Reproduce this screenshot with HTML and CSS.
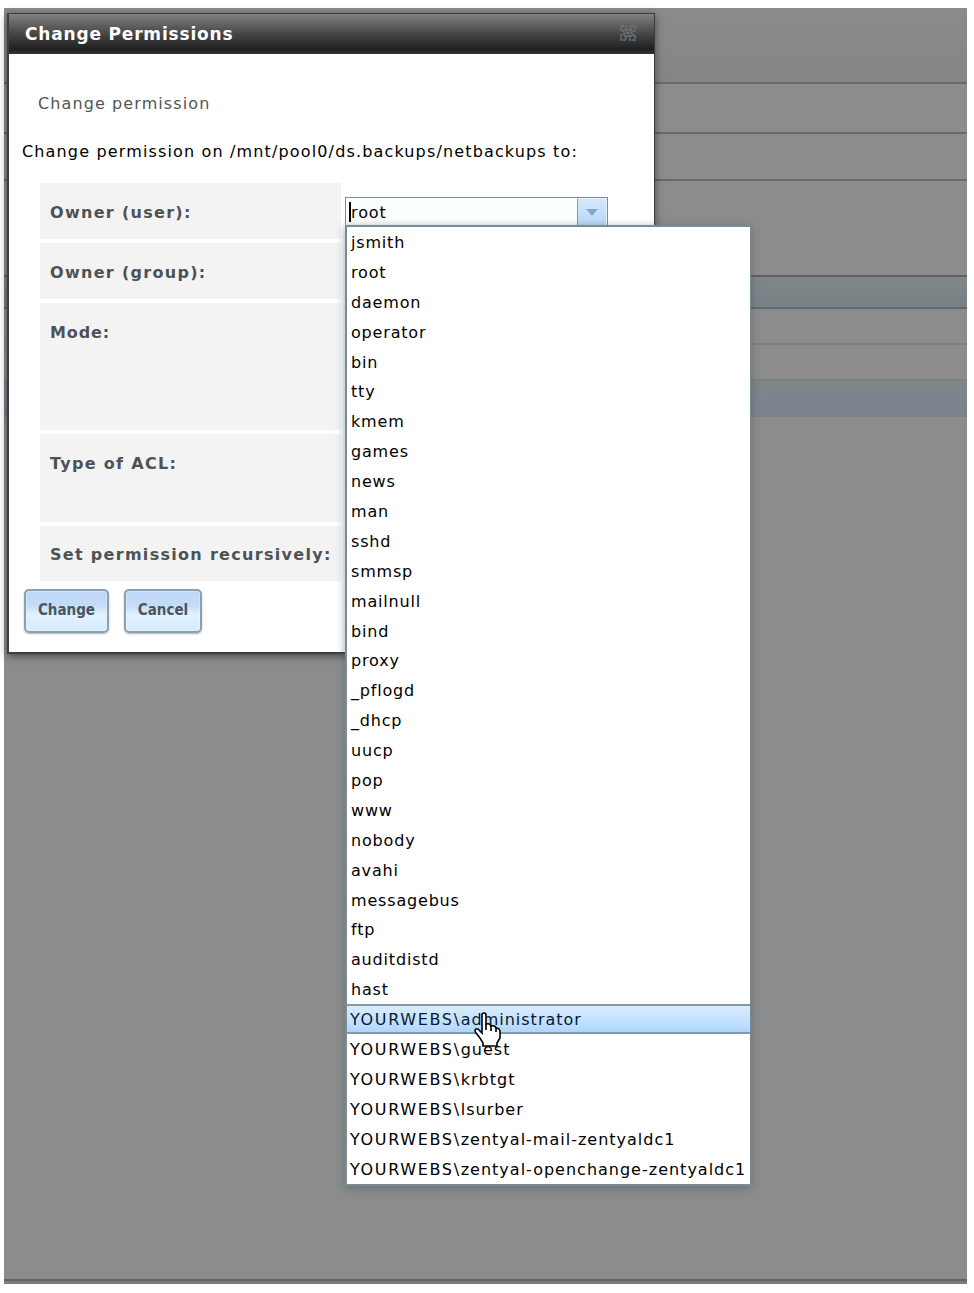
FILE: index.html
```html
<!DOCTYPE html>
<html lang="en">
<head>
<meta charset="utf-8">
<title>Change Permissions</title>
<link rel="stylesheet" href="styles.css">
</head>
<body>
<main class="screen">
  <div class="backdrop">
    <div class="band band-top"></div>
    <div class="band band-a"></div>
    <div class="band band-b"></div>
    <div class="band band-c"></div>
    <div class="band band-head"></div>
    <div class="band band-row"></div>
    <div class="band band-alt"></div>
    <div class="band band-blue"></div>
    <div class="band band-rest"></div>
    <div class="band band-foot"></div>
  </div>

  <section class="dialog">
    <header class="titlebar">
      <h1 class="title">Change Permissions</h1>
      <svg class="close" width="18" height="18" viewBox="0 0 18 18">
        <g fill="none" stroke="#6b7683" stroke-width="1.5" stroke-dasharray="3 1">
          <path d="M2 2h5v3l2 1 2-1V2h5v5h-2l-2 2 2 2h2v5h-5v-3l-2-1-2 1v3H2v-5h2l2-2-2-2H2z"/>
          <path d="M5 5l8 8M13 5l-8 8"/>
        </g>
      </svg>
    </header>
    <div class="body">
      <p class="caption">Change permission</p>
      <p class="intro">Change permission on /mnt/pool0/ds.backups/netbackups to:</p>
      <div class="form">
        <div class="labels">
          <div class="label">Owner (user):</div>
          <div class="label">Owner (group):</div>
          <div class="label label-mode">Mode:</div>
          <div class="label label-acl">Type of ACL:</div>
          <div class="label label-set">Set permission recursively:</div>
        </div>
        <div class="combo">
          <span class="value">root</span>
          <span class="arrow"><svg width="12" height="7" viewBox="0 0 12 7"><path d="M0 0h12L6 7z" fill="#86a3c8"/></svg></span>
        </div>
      </div>
      <div class="actions">
        <button class="btn btn-change">Change</button>
        <button class="btn btn-cancel">Cancel</button>
      </div>
    </div>
  </section>

  <ul class="menu">
    <li>jsmith</li>
    <li>root</li>
    <li>daemon</li>
    <li>operator</li>
    <li>bin</li>
    <li>tty</li>
    <li>kmem</li>
    <li>games</li>
    <li>news</li>
    <li>man</li>
    <li>sshd</li>
    <li>smmsp</li>
    <li>mailnull</li>
    <li>bind</li>
    <li>proxy</li>
    <li>_pflogd</li>
    <li>_dhcp</li>
    <li>uucp</li>
    <li>pop</li>
    <li>www</li>
    <li>nobody</li>
    <li>avahi</li>
    <li>messagebus</li>
    <li>ftp</li>
    <li>auditdistd</li>
    <li>hast</li>
    <li class="account active"><span class="domain">YOURWEBS\</span>administrator</li>
    <li class="account"><span class="domain">YOURWEBS\</span>guest</li>
    <li class="account"><span class="domain">YOURWEBS\</span>krbtgt</li>
    <li class="account"><span class="domain">YOURWEBS\</span>lsurber</li>
    <li class="account"><span class="domain">YOURWEBS\</span>zentyal-mail-zentyaldc1</li>
    <li class="account"><span class="domain">YOURWEBS\</span>zentyal-openchange-zentyaldc1</li>
  </ul>

  <svg class="cursor" width="27" height="36" viewBox="0 0 27 36">
    <path d="M8 3q0-2 2-2t2 2v9q4-1 5 2 4-1 5 2 4 0 4 4v6l-3 5v3H9v-3l-3-5-4-5q-2-3 0-4t4 2l2 2z" fill="#fff" stroke="#000" stroke-width="1.6"/>
    <path d="M12 11v7M17 13v6M22 15v5" fill="none" stroke="#000" stroke-width="1.6"/>
  </svg>
</main>
</body>
</html>
```
FILE: styles.css
```css
* { box-sizing: border-box; }
body {
  margin: 0;
  background: #fff;
  font-family: "DejaVu Sans", sans-serif;
  font-size: 16px;
  color: #000;
}
.screen {
  position: relative;
  width: 974px;
  height: 1293px;
  padding: 8px 7px 9px 4px;
  overflow: hidden;
}
.backdrop { display: flex; flex-direction: column; height: 1276px; background: #8c8c8c; }
.band { flex: none; border-bottom: 2px solid #696969; }
.band-top { height: 76px; background: linear-gradient(#8b8b8b, #858585); }
.band-a { height: 50px; }
.band-b { height: 47px; }
.band-c { height: 96px; border-color: #5b6065; }
.band-head { height: 32px; background: linear-gradient(#80878a, #788084); border-color: #62686b; }
.band-row { height: 36px; border-color: #7f7f7f; }
.band-alt { height: 36px; background: #8c8c8a; border-color: #7c8081; }
.band-blue { height: 36px; background: linear-gradient(#7f8688, #7b8590 50%, #7a8389); border: 0; }
.band-rest { flex: 1; border-color: #636363; }
.band-foot { height: 3px; background: #7c7c7c; border: 0; }

.dialog {
  position: absolute;
  left: 7px;
  top: 13px;
  width: 648px;
  height: 641px;
  background: #fff;
  border: 2px solid #3e3e3e;
  border-width: 1px 1px 2px 2px;
  box-shadow: 0 2px 8px rgba(0, 0, 0, .5);
}
.titlebar {
  display: flex;
  align-items: center;
  justify-content: space-between;
  height: 40px;
  padding: 0 17px 0 16px;
  background: linear-gradient(#828282, #4b4b4b 45%, #202020 88%, #343434);
}
.title { margin: 0; font-size: 17px; font-weight: bold; color: #fff; letter-spacing: .82px; }
.close { margin-top: -3px; }
.body { padding: 35px 0 0 13px; }
.caption { margin: 0 0 0 16px; line-height: 30px; color: #555; letter-spacing: 1.1px; }
.intro { margin: 18px 0 0; line-height: 30px; letter-spacing: 1.15px; white-space: nowrap; }
.form { display: flex; align-items: flex-start; gap: 4px; margin: 16px 0 0 18px; }
.labels { display: flex; flex-direction: column; gap: 4px; width: 301px; }
.label {
  height: 56px;
  padding: 15px 0 0 10px;
  background: #f3f3f3;
  line-height: 30px;
  font-size: 16px;
  font-weight: bold;
  color: #4d5256;
  letter-spacing: 1.3px;
  white-space: nowrap;
}
.label-mode { height: 127px; letter-spacing: .9px; }
.label-acl { height: 88px; }
.label-set { height: 55px; padding-top: 14px; }
.combo {
  display: flex;
  width: 263px;
  height: 30px;
  margin-top: 14px;
  border: 1px solid #769097;
  background: linear-gradient(#fff, #fafdfd);
}
.value { flex: 1; margin: 4px 0 4px 3px; border-left: 2px solid #000; line-height: 21px; letter-spacing: .9px; }
.arrow {
  display: flex;
  align-items: center;
  justify-content: center;
  width: 30px;
  border: 1px solid #eaf6ff;
  border-left: 1px solid #769fba;
  background: linear-gradient(#d5e8fc, #b8d8f8);
}
.actions { display: flex; gap: 15px; margin: 8px 0 0 2px; }
.btn {
  height: 44px;
  padding: 0 0 2px;
  border: 2px solid #8ba0b0;
  border-radius: 5px;
  background: linear-gradient(#bdd8f7, #c3dcf8 35%, #e1f1ff 60%, #d5ebff);
  box-shadow: inset 0 0 2px #fff, 0 1px 2px rgba(0, 0, 0, .3);
  font-family: "DejaVu Sans Condensed", "DejaVu Sans", sans-serif;
  font-size: 15px;
  font-weight: bold;
  color: #4b555e;
}
.btn-change { width: 85px; }
.btn-cancel { width: 78px; }

.menu {
  position: absolute;
  left: 345px;
  top: 225px;
  width: 406px;
  height: 961px;
  margin: 0;
  padding: 0;
  list-style: none;
  background: #fff;
  border: 2px solid #7b8b93;
  border-width: 2px 1px 2px 2px;
  box-shadow: 0 2px 8px rgba(70, 90, 100, .55);
  display: grid;
  grid-auto-rows: 29.9px;
}
.menu li { padding-left: 4px; line-height: 32px; letter-spacing: .82px; white-space: nowrap; }
.menu .account { padding-left: 3px; letter-spacing: 1px; }
.domain { letter-spacing: 1.65px; }
.menu .active {
  background: linear-gradient(#ddeeff, #b9dcff 75%, #a9d2fb);
  box-shadow: inset 0 2px #8199a8, inset 0 -2px #8199a8;
  color: #0a1930;
}
.cursor { position: absolute; left: 474px; top: 1012px; }
```
